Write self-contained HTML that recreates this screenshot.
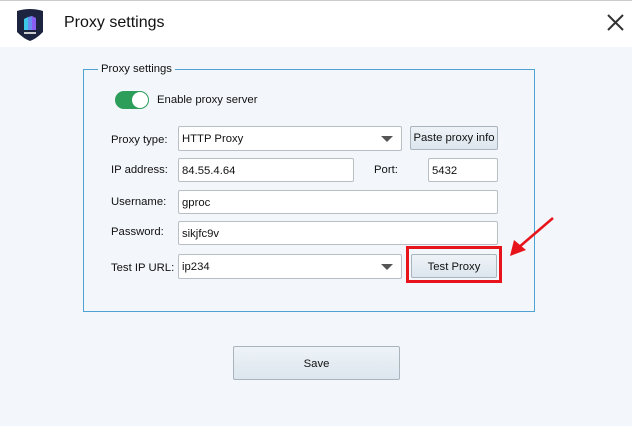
<!DOCTYPE html>
<html><head><style>
body{margin:0;width:632px;height:426px;background:#f3f6fa;font-family:"Liberation Sans",sans-serif;position:relative;overflow:hidden;font-size:11.3px;color:#111}
.a{position:absolute;white-space:nowrap}
.hdr{left:0;top:0;width:632px;height:47px;background:#fff;border-top:1px solid #ccc;box-sizing:border-box}
.inp{position:absolute;background:#fff;border:1px solid #b9bec5;border-radius:2px;box-sizing:border-box;padding:0 3px;line-height:24px;white-space:nowrap}
.btn{position:absolute;background:linear-gradient(#eef3f7,#dce6ee);border:1px solid #aab4bd;border-radius:2px;box-sizing:border-box;text-align:center;white-space:nowrap}
.lbl{position:absolute;left:111px;white-space:nowrap}
.dd{position:absolute;right:8px;top:9px;width:0;height:0;border-left:6px solid transparent;border-right:6px solid transparent;border-top:6px solid #555}
</style></head><body>
<div class="a hdr"></div>
<svg class="a" style="left:16px;top:8px" width="28" height="34" viewBox="0 0 28 34"><path d="M1 3 Q14 -1 27 3 V24 Q20 31 14 33 Q8 31 1 24Z" fill="#1c2440"/><path d="M8 11 L12 9 V22 H8Z" fill="#3cc8e6"/><path d="M12 9 L16 8 V22 H12Z" fill="#6a8cf0"/><path d="M16 8 L20 10 V22 H16Z" fill="#8b5cf0"/><rect x="8" y="24" width="12" height="2" fill="#ccc"/></svg>
<div class="a" style="left:64px;top:14px;font-size:16px">Proxy settings</div>
<svg class="a" style="left:607px;top:14px" width="17" height="17"><path d="M1 1L16 16M16 1L1 16" stroke="#333" stroke-width="2"/></svg>
<div class="a" style="left:83px;top:69px;width:452px;height:243px;border:1px solid #4ea3d3;box-sizing:border-box"></div>
<div class="a" style="left:98px;top:63px;padding:0 3px;background:#f3f6fa">Proxy settings</div>
<div class="a" style="left:115px;top:91px;width:34px;height:18px;border-radius:9px;background:#2c9e5a"></div>
<div class="a" style="left:132px;top:92px;width:16px;height:16px;border-radius:8px;background:#fff"></div>
<div class="a" style="left:157px;top:94px">Enable proxy server</div>
<div class="lbl" style="top:134px">Proxy type:</div>
<div class="inp" style="left:178px;top:126px;width:224px;height:25px">HTTP Proxy<div class="dd"></div></div>
<div class="btn" style="left:410px;top:126px;width:88px;height:24px;line-height:23px">Paste proxy info</div>
<div class="lbl" style="top:164px">IP address:</div>
<div class="inp" style="left:178px;top:158px;width:176px;height:24px">84.55.4.64</div>
<div class="a" style="left:374px;top:164px">Port:</div>
<div class="inp" style="left:428px;top:158px;width:70px;height:24px">5432</div>
<div class="lbl" style="top:196px">Username:</div>
<div class="inp" style="left:178px;top:190px;width:320px;height:24px">gproc</div>
<div class="lbl" style="top:226px">Password:</div>
<div class="inp" style="left:178px;top:221px;width:320px;height:24px">sikjfc9v</div>
<div class="lbl" style="top:262px">Test IP URL:</div>
<div class="inp" style="left:178px;top:254px;width:224px;height:25px">ip234<div class="dd"></div></div>
<div class="btn" style="left:411px;top:254px;width:86px;height:24px;line-height:24px">Test Proxy</div>
<div class="a" style="left:406px;top:246px;width:96px;height:37px;border:3px solid #e8141b;box-sizing:border-box"></div>
<svg class="a" style="left:500px;top:210px" width="60" height="56"><path d="M53 8 L18 38" stroke="#e8141b" stroke-width="2.5"/><path d="M10 46 L14 30 L26 40Z" fill="#e8141b"/></svg>
<div class="btn" style="left:233px;top:346px;width:167px;height:34px;line-height:34px">Save</div>
</body></html>
